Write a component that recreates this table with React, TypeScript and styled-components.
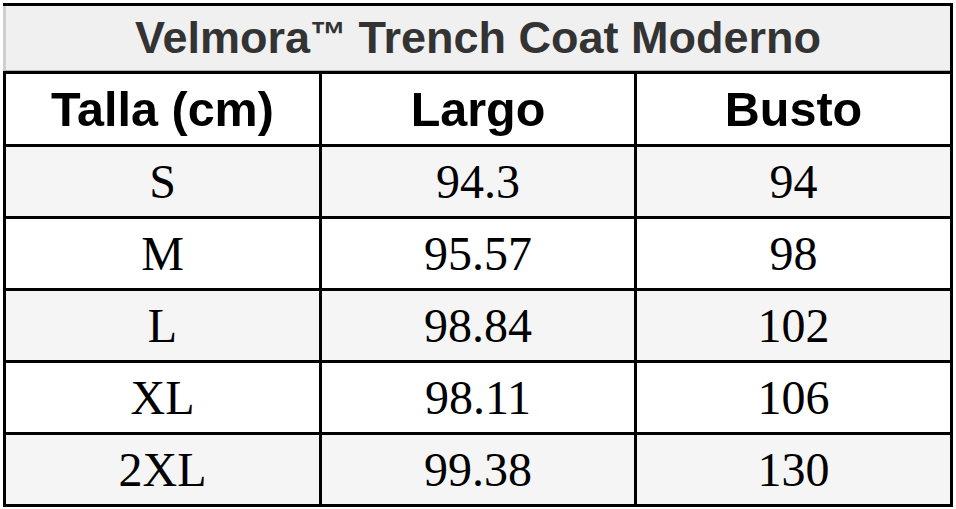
import styled, { createGlobalStyle } from "styled-components";

const GlobalStyle = createGlobalStyle`
  html, body {
    margin: 0;
    padding: 0;
    background: #fff;
  }
`;

// Styled components
const Page = styled.div`
  padding: 3px;
  width: 956px;
  box-sizing: border-box;
`;

const Grid = styled.div`
  display: grid;
  grid-template-columns: 313px 312px 313px;
  gap: 3px;
  padding: 3px;
  width: 950px;
  box-sizing: border-box;
  background: #000;
`;

const Title = styled.div`
  grid-column: 1 / -1;
  height: 65px;
  margin-left: -3px;
  border-left: 3px solid #cfcfcf;
  border-bottom: 1px solid #b5b5b5;
  box-sizing: border-box;
  background: #f0f0f0;
  color: #333;
  display: flex;
  align-items: center;
  justify-content: center;
  font-family: "Liberation Sans", Arial, sans-serif;
  font-weight: bold;
  font-size: 45px;
  white-space: pre;
`;

const Trademark = styled.span`
  font-size: 0.8em;
  position: relative;
  top: -3px;
`;

const HeadCell = styled.div`
  height: 70px;
  background: #fff;
  color: #000;
  display: flex;
  align-items: center;
  justify-content: center;
  font-family: "Liberation Sans", Arial, sans-serif;
  font-weight: bold;
  font-size: 48.5px;
`;

const Cell = styled.div<{ $shade: boolean }>`
  height: 69px;
  background: ${(p) => (p.$shade ? "#f5f5f5" : "#fff")};
  color: #000;
  display: flex;
  align-items: center;
  justify-content: center;
  font-family: "Liberation Serif", "Times New Roman", serif;
  font-size: 48px;
`;

// Main component
const App = () => {
  const rows = [
    { size: "S", largo: "94.3", busto: "94" },
    { size: "M", largo: "95.57", busto: "98" },
    { size: "L", largo: "98.84", busto: "102" },
    { size: "XL", largo: "98.11", busto: "106" },
    { size: "2XL", largo: "99.38", busto: "130" },
  ];

  return (
    <Page>
      <GlobalStyle />
      <Grid>
        <Title>
          Velmora<Trademark>™</Trademark> Trench Coat Moderno
        </Title>
        <HeadCell>Talla (cm)</HeadCell>
        <HeadCell>Largo</HeadCell>
        <HeadCell>Busto</HeadCell>
        {rows.map((row, index) => (
          <>
            <Cell key={`s${index}`} $shade={index % 2 === 0}>
              {row.size}
            </Cell>
            <Cell key={`l${index}`} $shade={index % 2 === 0}>
              {row.largo}
            </Cell>
            <Cell key={`b${index}`} $shade={index % 2 === 0}>
              {row.busto}
            </Cell>
          </>
        ))}
      </Grid>
    </Page>
  );
};

export default App;
